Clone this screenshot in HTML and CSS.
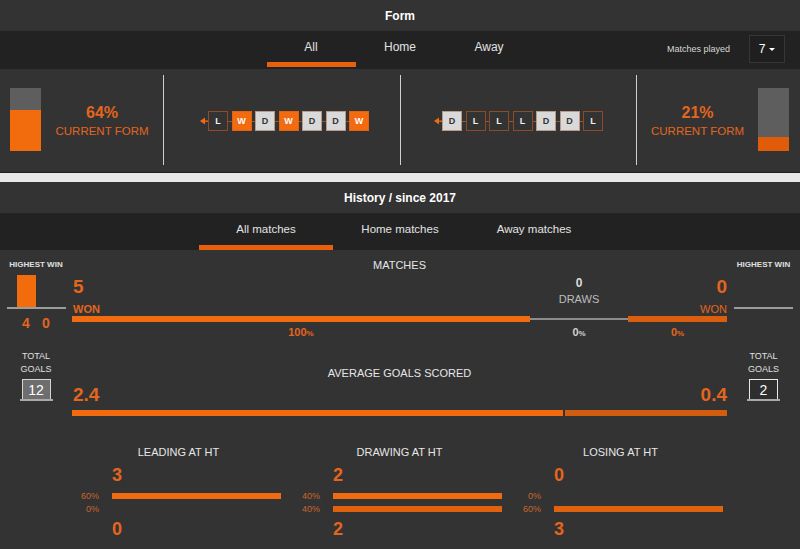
FILE: index.html
```html
<!DOCTYPE html>
<html>
<head>
<meta charset="utf-8">
<link rel="stylesheet" href="styles.css">
</head>
<body>
<div class="bar-head">Form</div>
<div class="tabbar form-tabs">
  <div></div>
  <nav class="tabs">
    <span class="tab active">All</span><span class="tab">Home</span><span class="tab">Away</span>
  </nav>
  <div class="played"><span>Matches played</span><span class="select">7<i class="caret"></i></span></div>
</div>
<section class="form">
  <div class="panel team team-l">
    <div class="gauge"><div class="gauge-fill" style="height:64%"></div></div>
    <div class="cf"><div class="cf-pct">64%</div><div class="cf-lbl">CURRENT FORM</div></div>
  </div>
  <div class="panel seq-panel seq-l">
    <div class="seq">
      <svg class="arrow" width="8" height="8" viewBox="0 0 8 8"><polygon points="0,4 5,0.5 5,7.5" fill="#f26b10"/><rect x="4" y="3.5" width="4" height="1.2" fill="#f26b10"/></svg>
      <span class="res l">L</span><span class="res w">W</span><span class="res d">D</span><span class="res w">W</span><span class="res d">D</span><span class="res d">D</span><span class="res w">W</span>
    </div>
  </div>
  <div class="panel seq-panel">
    <div class="seq">
      <svg class="arrow" width="8" height="8" viewBox="0 0 8 8"><polygon points="0,4 5,0.5 5,7.5" fill="#f26b10"/><rect x="4" y="3.5" width="4" height="1.2" fill="#f26b10"/></svg>
      <span class="res d">D</span><span class="res l">L</span><span class="res l">L</span><span class="res l">L</span><span class="res d">D</span><span class="res d">D</span><span class="res l">L</span>
    </div>
  </div>
  <div class="panel team team-r">
    <div class="cf"><div class="cf-pct">21%</div><div class="cf-lbl">CURRENT FORM</div></div>
    <div class="gauge"><div class="gauge-fill" style="height:21%"></div></div>
  </div>
</section>
<div class="sep"></div>
<div class="bar-head">History / since 2017</div>
<div class="tabbar hist-tabs">
  <div></div>
  <nav class="tabs">
    <span class="tab active">All matches</span><span class="tab">Home matches</span><span class="tab">Away matches</span>
  </nav>
  <div></div>
</div>
<section class="hist">
  <aside class="side">
    <div class="side-title">HIGHEST WIN</div>
    <div class="hw-chart"><div class="hw-bar" style="height:100%"></div><div class="hw-bar" style="height:0%"></div></div>
    <div class="hw-nums"><span>4</span><span>0</span></div>
    <div class="tg-lbl">TOTAL<br>GOALS</div>
    <div class="goal goal-light">12</div>
    <div class="goal-base"></div>
  </aside>
  <div class="main">
    <div class="sec-title">MATCHES</div>
    <div class="mgrid">
      <div class="m-num m-left">5</div>
      <div class="m-draw"><div class="d-num">0</div><div class="d-lbl">DRAWS</div></div>
      <div class="m-num m-right">0</div>
      <div class="m-lbl m-left">WON</div>
      <div class="m-lbl m-right reg">WON</div>
      <div class="seg seg-home"></div>
      <div class="seg seg-draw"></div>
      <div class="seg seg-away"></div>
      <div class="pct">100<small>%</small></div>
      <div class="pct pct-draw">0<small>%</small></div>
      <div class="pct">0<small>%</small></div>
    </div>

    <div class="sec-title avg-title">AVERAGE GOALS SCORED</div>
    <div class="avg-nums"><span>2.4</span><span>0.4</span></div>
    <div class="avg-bar"><div class="ab ab-home"></div><div class="ab ab-away"></div></div>

    <div class="ht">
      <div class="ht-col">
        <div class="ht-title">LEADING AT HT</div>
        <div class="ht-num">3</div>
        <div class="ht-row"><span class="ht-pct">60%</span><span class="ht-bar hb-top"></span></div>
        <div class="ht-row row2"><span class="ht-pct">0%</span><span></span></div>
        <div class="ht-num bottom">0</div>
      </div>
      <div class="ht-col">
        <div class="ht-title">DRAWING AT HT</div>
        <div class="ht-num">2</div>
        <div class="ht-row"><span class="ht-pct">40%</span><span class="ht-bar hb-top"></span></div>
        <div class="ht-row row2"><span class="ht-pct">40%</span><span class="ht-bar hb-bot"></span></div>
        <div class="ht-num bottom">2</div>
      </div>
      <div class="ht-col">
        <div class="ht-title">LOSING AT HT</div>
        <div class="ht-num">0</div>
        <div class="ht-row"><span class="ht-pct">0%</span><span></span></div>
        <div class="ht-row row2"><span class="ht-pct">60%</span><span class="ht-bar hb-bot"></span></div>
        <div class="ht-num bottom">3</div>
      </div>
    </div>
  </div>
  <aside class="side">
    <div class="side-title">HIGHEST WIN</div>
    <div class="hw-chart hw-empty"></div>
    <div class="hw-nums"></div>
    <div class="tg-lbl">TOTAL<br>GOALS</div>
    <div class="goal goal-dark">2</div>
    <div class="goal-base"></div>
  </aside>
</section>
</body>
</html>
```

FILE: styles.css
```css
html, body {
  margin: 0;
  padding: 0;
}
body {
  width: 800px;
  height: 549px;
  overflow: hidden;
  background: #333333;
  font-family: "Liberation Sans", Arial, sans-serif;
  color: #e6e6e6;
}

.bar-head {
  height: 31px;
  display: flex;
  align-items: center;
  justify-content: center;
  background: #333333;
  color: #ffffff;
  font-weight: bold;
  font-size: 12px;
}

.tabbar {
  background: #222222;
  display: grid;
  grid-template-columns: 1fr auto 1fr;
}
.form-tabs {
  height: 38px;
}
.hist-tabs {
  height: 37px;
}
.tabs {
  display: flex;
}
.tab {
  display: flex;
  align-items: center;
  justify-content: center;
  font-size: 12px;
  color: #e2e2e2;
  position: relative;
  padding-bottom: 6px;
}
.form-tabs .tab {
  width: 89px;
}
.hist-tabs .tab {
  width: 134px;
  font-size: 11.5px;
  padding-bottom: 5px;
}
.tab.active::after {
  content: "";
  position: absolute;
  left: 0;
  right: 0;
  bottom: 2px;
  height: 5px;
  background: #e8600c;
}
.hist-tabs .tab.active::after {
  bottom: 0;
}

.played {
  justify-self: end;
  display: flex;
  align-items: center;
  gap: 19px;
  margin-right: 15px;
  margin-bottom: 2px;
  font-size: 9px;
  color: #d8d8d8;
}
.select {
  width: 36px;
  height: 28px;
  box-sizing: border-box;
  border: 1px solid #363636;
  background: #1f1f1f;
  display: flex;
  align-items: center;
  justify-content: center;
  gap: 4px;
  color: #ffffff;
  font-size: 12px;
}
.caret {
  width: 0;
  height: 0;
  border-left: 3px solid transparent;
  border-right: 3px solid transparent;
  border-top: 3px solid #ffffff;
}

/* form section */
.form {
  display: grid;
  grid-template-columns: 163px 237px 236px 164px;
  height: 103px;
  box-sizing: border-box;
  padding: 6px 0 7px;
  background: #333333;
}
.panel {
  display: flex;
  align-items: center;
}
.panel + .panel {
  border-left: 1px solid #cfcfcf;
}
.team-l {
  padding-left: 10px;
}
.team-r {
  padding-right: 11px;
}
.gauge {
  width: 31px;
  height: 63px;
  background: #5e5e5e;
  display: flex;
  flex-direction: column;
  justify-content: flex-end;
  margin-top: -2px;
}
.gauge-fill {
  background: #f26b0c;
}
.team-r .gauge-fill {
  background: #e05c0b;
}
.cf {
  flex: 1;
  text-align: center;
  color: #e4651e;
  margin-top: 2px;
}
.cf-pct {
  font-size: 16px;
  font-weight: bold;
  line-height: 18px;
}
.cf-lbl {
  font-size: 11.5px;
  line-height: 14px;
  margin-top: 2px;
}
.seq-panel {
  justify-content: center;
}
.seq-l {
  padding-left: 5px;
}
.seq {
  display: flex;
  align-items: center;
  gap: 3.5px;
  position: relative;
  margin-top: 1px;
}
.seq::before {
  content: "";
  position: absolute;
  left: 6px;
  right: 2px;
  top: 50%;
  height: 1px;
  background: #9b5426;
}
.arrow {
  margin-right: -3.5px;
  position: relative;
}
.res {
  position: relative;
  width: 20px;
  height: 20px;
  box-sizing: border-box;
  display: flex;
  align-items: center;
  justify-content: center;
  font-size: 9px;
  font-weight: bold;
}
.res.l {
  background: #333333;
  border: 1px solid #8e4b24;
  color: #f0f0f0;
}
.res.w {
  background: #f26b10;
  border: 1px solid #e2620e;
  color: #ffffff;
}
.res.d {
  background: #d9d9d9;
  border: 1px solid #b99a86;
  color: #333333;
}

.sep {
  height: 9px;
  background: #e8e8e8;
  border-top: 1px solid #1d1d1d;
}

/* history */
.hist {
  display: grid;
  grid-template-columns: 72px 655px 73px;
}
.side {
  display: flex;
  flex-direction: column;
  align-items: center;
  padding-top: 10px;
}
.side-title {
  font-size: 8px;
  font-weight: bold;
  line-height: 10px;
  color: #e0e0e0;
}
.hw-chart {
  margin-top: 5px;
  width: 59px;
  height: 32px;
  border-bottom: 2px solid #9c9c9c;
  display: flex;
  justify-content: center;
  align-items: flex-end;
  gap: 1px;
}
.hw-bar {
  width: 19px;
  background: #f26b0c;
}
.hw-nums {
  margin-top: 6px;
  height: 16px;
  display: flex;
  gap: 1px;
  font-size: 14px;
  font-weight: bold;
  line-height: 16px;
  color: #e4651e;
}
.hw-nums span {
  width: 19px;
  text-align: center;
}
.tg-lbl {
  margin-top: 19px;
  font-size: 9px;
  line-height: 12.5px;
  text-align: center;
  color: #e0e0e0;
}
.goal {
  margin-top: 4px;
  width: 29px;
  height: 20px;
  box-sizing: border-box;
  border: 1px solid #d4d4d4;
  border-bottom: none;
  display: flex;
  align-items: center;
  justify-content: center;
  font-size: 14px;
  line-height: 1;
  color: #ffffff;
}
.goal-light {
  background: #6e6e6e;
}
.goal-dark {
  background: #2e2e2e;
  border-width: 1.5px;
  border-color: #e8e8e8;
}
.goal-base {
  width: 33px;
  height: 2px;
  background: #a9a9a9;
}

.main {
  padding-top: 9px;
}
.sec-title {
  text-align: center;
  font-size: 11px;
  line-height: 13px;
  color: #e6e6e6;
}
.mgrid {
  margin-top: 5px;
  display: grid;
  grid-template-columns: 458px 98px 99px;
  grid-template-rows: 26px 13px 6px auto;
}
.m-num {
  grid-row: 1;
  font-size: 19px;
  font-weight: bold;
  line-height: 20px;
  color: #e4651e;
}
.m-left {
  grid-column: 1;
  padding-left: 1px;
}
.m-right {
  grid-column: 3;
  text-align: right;
}
.m-lbl {
  grid-row: 2;
  font-size: 11px;
  font-weight: bold;
  line-height: 13px;
  color: #e4651e;
}
.m-lbl.reg {
  font-weight: normal;
}
.m-draw {
  grid-column: 2;
  grid-row: 1 / 3;
  text-align: center;
  color: #c4c4c4;
}
.d-num {
  font-size: 12px;
  font-weight: bold;
  line-height: 12px;
  color: #dddddd;
}
.d-lbl {
  margin-top: 4px;
  font-size: 11px;
  line-height: 13px;
  color: #bdbdbd;
}
.seg {
  grid-row: 3;
}
.seg-home {
  background: #f26b10;
}
.seg-draw {
  align-self: center;
  height: 2px;
  background: #8c8c8c;
}
.seg-away {
  background: #d95e10;
}
.pct {
  grid-row: 4;
  margin-top: 4px;
  text-align: center;
  font-size: 11px;
  font-weight: bold;
  line-height: 13px;
  color: #e4651e;
}
.pct small {
  font-size: 8px;
}
.pct-draw {
  color: #d2d2d2;
}

.avg-title {
  margin-top: 27px;
}
.avg-nums {
  margin-top: 5px;
  display: flex;
  justify-content: space-between;
  font-size: 19px;
  font-weight: bold;
  line-height: 20px;
  color: #e4651e;
  padding-left: 1px;
}
.avg-bar {
  margin-top: 5px;
  display: flex;
  gap: 2px;
  height: 6px;
}
.ab-home {
  width: 491px;
  background: #f26b10;
}
.ab-away {
  flex: 1;
  background: #d25c10;
}

.ht {
  margin-top: 30px;
  margin-left: -4px;
  display: grid;
  grid-template-columns: repeat(3, 221px);
}
.ht-col {
  display: flex;
  flex-direction: column;
}
.ht-title {
  text-align: center;
  font-size: 11px;
  line-height: 13px;
  color: #e6e6e6;
}
.ht-num {
  margin-top: 6px;
  padding-left: 44px;
  font-size: 18px;
  font-weight: bold;
  line-height: 20px;
  color: #e4651e;
}
.ht-num.bottom {
  margin-top: 7px;
}
.ht-row {
  margin-top: 8px;
  height: 6px;
  display: grid;
  grid-template-columns: 44px 169px;
}
.ht-row.row2 {
  margin-top: 7px;
}
.ht-pct {
  text-align: right;
  padding-right: 13px;
  font-size: 9px;
  line-height: 6px;
  color: #c9652c;
}
.ht-bar {
  height: 6px;
}
.hb-top {
  background: #f06a10;
}
.hb-bot {
  background: #e0620f;
}
```
